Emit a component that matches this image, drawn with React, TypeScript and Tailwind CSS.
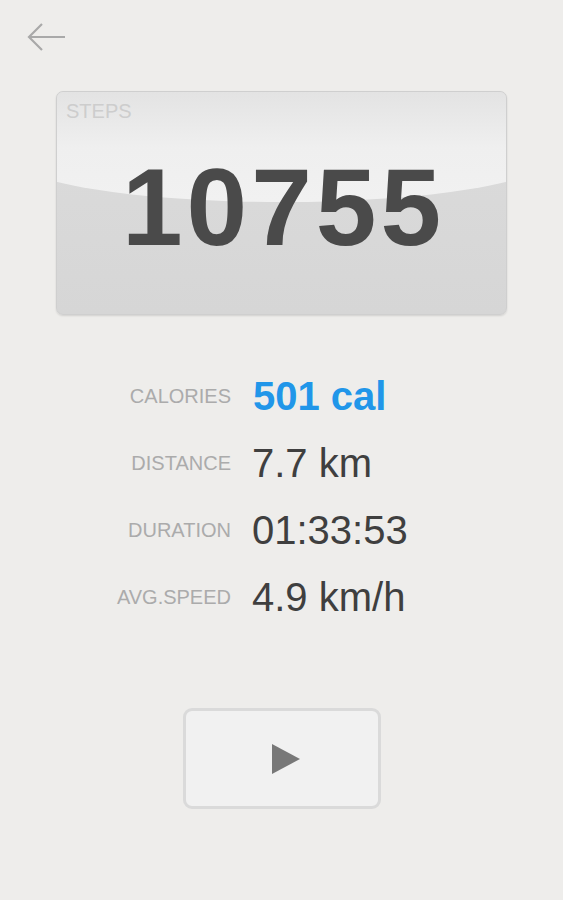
export default function App() {
  const stats = [
    { label: "CALORIES", value: "501 cal", accent: true },
    { label: "DISTANCE", value: "7.7 km" },
    { label: "DURATION", value: "01:33:53" },
    { label: "AVG.SPEED", value: "4.9 km/h" },
  ];

  return (
    <div className="h-[900px] w-full overflow-hidden bg-[#eeedeb] font-['Liberation_Sans',Arial,sans-serif]">
      <div className="pl-[27px] pt-[22px]">
        <svg width="40" height="32" viewBox="0 0 40 32" fill="none" stroke="#a9a9a9" strokeWidth="2.2">
          <path d="M2 15h36" />
          <path d="M15 2 2 15l13 13" />
        </svg>
      </div>

      <div className="mx-[56px] mt-[37px] h-[224px] relative overflow-hidden rounded-[7px] border border-[#cfcfcf] bg-gradient-to-b from-[#dcdcdc] to-[#d6d6d6] shadow-[0_1px_2px_rgba(0,0,0,0.12)]">
        <div className="absolute -left-[10%] -right-[10%] top-0 h-[110px] rounded-b-[50%_45px] bg-gradient-to-b from-[#e3e3e3] via-[#efefef] to-[#f1f1f1]" />
        <div className="relative pl-[9px] pt-[9px] text-[20px] leading-none text-[#cdcdcd]">STEPS</div>
        <div className="relative mt-[32px] pl-[4px] text-center text-[109px] font-bold leading-none text-[#4a4a4a] tracking-[4px]">10755</div>
      </div>

      <div className="mt-[60px] flex flex-col gap-[26px]">
        {stats.map((s) => (
          <div key={s.label} className="flex h-[41px] items-center">
            <div className="w-[231px] text-right text-[20px] text-[#ababab]">{s.label}</div>
            <div
              className={
                s.accent
                  ? "ml-[22px] text-[40px] font-bold text-[#2196e9]"
                  : "ml-[21px] text-[40px] text-[#3f3f3f]"
              }
            >
              {s.value}
            </div>
          </div>
        ))}
      </div>

      <div className="mt-[91px] flex justify-center">
        <button className="ml-[1px] flex h-[101px] w-[198px] items-center justify-center rounded-[9px] border-[3px] border-[#dadada] bg-[#f1f1f1]">
          <svg width="30" height="32" viewBox="0 0 30 32" className="ml-[7px]">
            <path d="M1 1 29 16 1 31Z" fill="#787878" />
          </svg>
        </button>
      </div>
    </div>
  );
}
